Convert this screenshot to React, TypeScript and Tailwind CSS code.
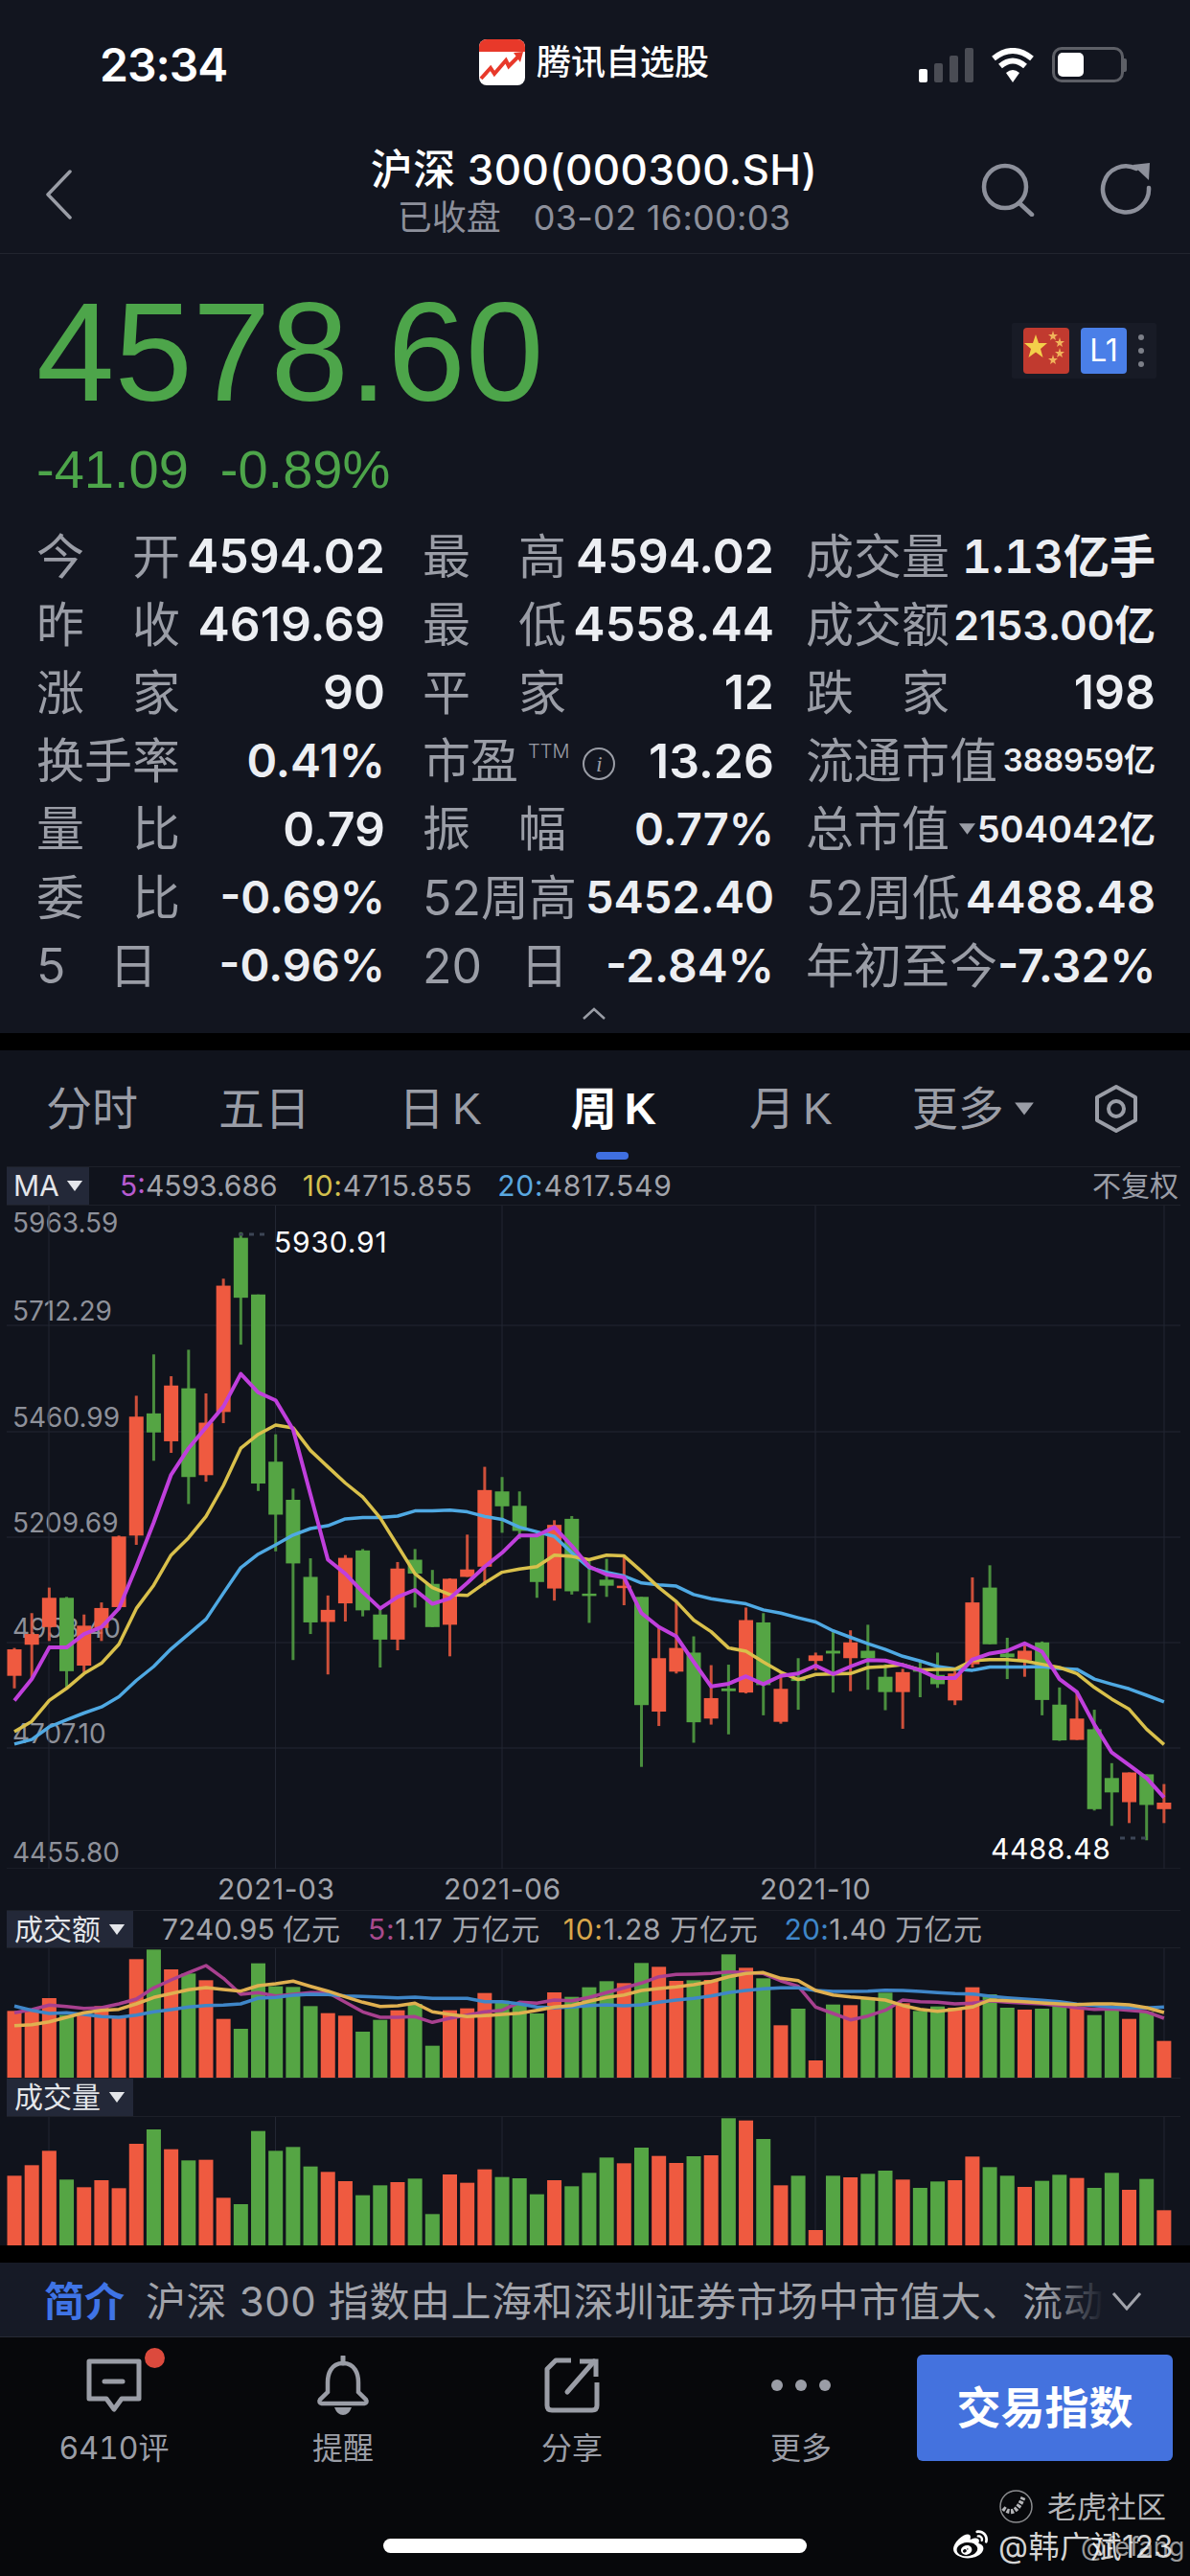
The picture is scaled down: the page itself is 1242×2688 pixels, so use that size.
import React from 'react';
import { FaWeibo } from 'react-icons/fa';

const RED = '#ef5a40';
const GREEN = '#55a544';

// color, wick top, body top, body bottom, wick bottom (raw chart units, scaled by toChartY)
type Candle = ['r' | 'g', number, number, number, number];

const candles: Candle[] = [
  ['r', 1070, 1073, 1130, 1157], ['r', 995, 1040, 1063, 1135], ['r', 940, 962, 1025, 1055], ['g', 960, 962, 1120, 1155],
  ['r', 998, 1022, 1108, 1122], ['r', 972, 984, 1027, 1055], ['r', 828, 830, 982, 985], ['r', 527, 572, 828, 848],
  ['g', 438, 565, 606, 667], ['r', 485, 505, 625, 650], ['g', 428, 511, 702, 760], ['r', 522, 585, 698, 712],
  ['r', 275, 290, 562, 586], ['g', 175, 187, 316, 417], ['g', 309, 309, 716, 732], ['g', 610, 669, 783, 862],
  ['g', 727, 751, 888, 1096], ['g', 877, 917, 1015, 1040], ['r', 957, 988, 1014, 1127], ['r', 870, 876, 974, 1013],
  ['g', 857, 860, 989, 1002], ['g', 985, 998, 1052, 1112], ['r', 885, 899, 1052, 1075], ['g', 857, 880, 910, 983],
  ['g', 902, 932, 1025, 1025], ['r', 920, 921, 1020, 1088], ['r', 826, 901, 917, 917], ['r', 680, 730, 895, 935],
  ['g', 702, 733, 765, 822], ['g', 733, 764, 818, 835], ['g', 820, 825, 928, 962], ['r', 795, 805, 942, 968],
  ['g', 786, 792, 948, 955], ['g', 880, 953, 958, 1016], ['g', 878, 923, 936, 960], ['r', 870, 936, 940, 978],
  ['g', 960, 960, 1193, 1326], ['r', 1025, 1092, 1207, 1238], ['r', 972, 1070, 1121, 1125], ['g', 1045, 1080, 1230, 1274],
  ['r', 1107, 1178, 1222, 1235], ['g', 1106, 1157, 1163, 1256], ['r', 983, 1010, 1166, 1168], ['g', 995, 1015, 1150, 1215],
  ['r', 1125, 1158, 1229, 1233], ['g', 1092, 1136, 1141, 1203], ['r', 1080, 1086, 1098, 1118], ['g', 1036, 1076, 1082, 1166],
  ['r', 1032, 1058, 1092, 1163], ['g', 1020, 1076, 1092, 1160], ['g', 1105, 1132, 1165, 1204], ['r', 1115, 1122, 1165, 1244],
  ['g', 1098, 1116, 1120, 1176], ['g', 1080, 1128, 1148, 1156], ['r', 1120, 1125, 1183, 1193], ['r', 918, 972, 1105, 1112],
  ['g', 892, 940, 1062, 1062], ['g', 1048, 1082, 1090, 1137], ['r', 1060, 1076, 1097, 1132], ['g', 1056, 1058, 1182, 1215],
  ['g', 1155, 1192, 1269, 1270], ['r', 1165, 1222, 1268, 1268], ['g', 1203, 1245, 1417, 1420], ['g', 1318, 1350, 1381, 1453],
  ['r', 1338, 1338, 1402, 1447], ['g', 1342, 1342, 1408, 1484], ['r', 1363, 1403, 1417, 1447],
];

const ma5 = [1183,1137,1069,1069,1040,1025,985,895,800,697,640,595,550,480,520,537,600,740,880,910,950,985,960,945,975,963,930,895,865,828,828,810,850,895,912,918,995,1025,1045,1100,1153,1147,1131,1148,1130,1125,1108,1126,1110,1096,1097,1107,1118,1135,1135,1095,1082,1076,1060,1078,1137,1165,1235,1295,1322,1350,1392];
const ma10 = [1250,1228,1183,1157,1125,1103,1062,985,935,870,833,787,720,640,610,590,596,645,680,715,745,790,850,910,940,955,957,930,907,900,895,870,873,880,870,872,905,940,970,1010,1035,1070,1077,1100,1122,1138,1127,1126,1125,1112,1110,1106,1117,1116,1116,1097,1095,1095,1098,1105,1112,1125,1155,1180,1202,1245,1278];
const ma20 = [1277,1267,1240,1225,1210,1197,1175,1140,1110,1072,1040,1008,952,897,868,848,827,813,807,792,789,789,786,775,775,773,777,787,793,810,820,830,865,897,907,915,930,934,937,955,964,970,975,988,995,1005,1014,1033,1047,1061,1073,1088,1098,1110,1115,1118,1111,1111,1111,1110,1114,1116,1137,1148,1158,1172,1186];

const turnover = [442,440,402,455,450,427,460,280,250,312,325,346,467,498,293,365,367,427,449,457,507,470,440,420,551,440,434,386,410,415,450,384,398,368,349,355,292,304,348,346,345,265,307,340,487,435,597,422,424,400,385,418,442,428,432,368,390,432,438,435,425,432,455,430,467,445,536];
const turnover5 = [448,438,424,428,434,432,420,405,370,345,322,300,340,390,385,395,390,385,385,415,445,462,462,460,478,465,455,445,440,415,418,408,410,400,385,370,355,335,328,327,325,320,322,325,348,365,430,450,470,458,440,408,413,415,420,418,410,415,418,420,425,432,437,436,440,445,465];
const turnover10 = [488,485,476,462,448,440,437,420,400,388,376,369,375,380,363,357,349,365,380,398,415,428,426,418,445,453,460,457,453,449,440,430,425,412,400,392,378,372,367,360,350,335,325,322,340,347,378,392,398,403,408,425,437,443,437,430,408,410,413,417,420,422,420,420,423,432,447];
const turnover20 = [427,440,450,448,453,460,462,455,445,438,430,425,424,420,402,400,393,390,391,395,397,399,401,399,403,403,403,413,413,420,430,432,430,425,423,426,423,415,408,403,395,385,378,373,370,370,378,381,381,380,377,378,381,385,388,389,396,401,405,409,413,421,425,430,432,433,430];
const volume = [958,925,880,970,994,972,997,858,813,875,910,908,1027,1047,818,880,868,929,946,975,1019,988,978,967,1078,954,980,938,962,966,1016,972,991,949,901,919,870,896,918,897,894,778,785,843,988,958,1128,958,963,952,942,970,996,976,972,898,931,958,993,974,955,965,996,949,1002,968,1066];

const BAR_WIDTH = 15;
const slotX = (i: number) => 15 + 18.18 * i;
const toChartY = (v: number) => v / 2.0632 - 57;
const toTurnoverY = (v: number) => v / 3 - 82;
const toVolumeY = (v: number) => v / 3 - 258;

const GRID = '#232733';
const GRID_X = [51, 287.5, 524, 851, 1215];

function toPoints(values: number[], scale: (v: number) => number) {
  return values.map((v, i) => `${slotX(i).toFixed(1)},${scale(v).toFixed(1)}`).join(' ');
}

function Caret({ className }: { className: string }) {
  return (
    <svg viewBox="0 0 20 14" className={className}>
      <path d="M1 1H19L10 13Z" fill="currentColor" />
    </svg>
  );
}

function StatusBar() {
  return (
    <div className="h-[132px] relative flex items-center justify-center shrink-0">
      <span className="absolute left-[104px] top-[40px] text-[48px] leading-[56px] font-semibold text-white tracking-[-1px]">23:34</span>
      <div className="flex items-center gap-[12px] -mt-[2px] ml-[-2px]">
        <svg viewBox="0 0 48 48" className="w-[48px] h-[48px]">
          <rect width="48" height="48" rx="8" fill="#fff" />
          <path d="M0 13V8a8 8 0 0 1 8-8h32a8 8 0 0 1 8 8v5Z" fill="#e8392a" />
          <path d="M2 41 L12 30 L16 36 L28 22 L31 28 L42 17" fill="none" stroke="#e8392a" strokeWidth="4" />
          <path d="M36 14 L46 13 L43 24Z" fill="#e8392a" />
        </svg>
        <span className="text-[36px] leading-[48px] font-medium text-white">腾讯自选股</span>
      </div>
      <div className="absolute left-[959px] top-[49px] flex items-center gap-[18px]">
        <div className="flex items-end gap-[7px] h-[36px]">
          <div className="w-[9px] h-[14px] rounded-[2px] bg-white" />
          <div className="w-[9px] h-[20px] rounded-[2px] bg-[#4a4c54]" />
          <div className="w-[9px] h-[28px] rounded-[2px] bg-[#4a4c54]" />
          <div className="w-[9px] h-[36px] rounded-[2px] bg-[#4a4c54]" />
        </div>
        <svg viewBox="0 0 46 36" className="w-[46px] h-[36px]">
          <path d="M3 11 Q23 -5 43 11" fill="none" stroke="#fff" strokeWidth="6" />
          <path d="M10 19 Q23 8 36 19" fill="none" stroke="#fff" strokeWidth="6" />
          <path d="M16 26 L23 36 L30 26 Q23 20 16 26Z" fill="#fff" />
        </svg>
        <div className="flex items-center">
          <div className="w-[75px] h-[37px] rounded-[10px] border-[3px] border-[#5d5f66] p-[3px]">
            <div className="w-[27px] h-full rounded-[5px] bg-white" />
          </div>
          <div className="w-[3px] h-[14px] bg-[#5d5f66] rounded-r-[2px]" />
        </div>
      </div>
    </div>
  );
}

function NavBar() {
  return (
    <div className="h-[133px] relative shrink-0 border-b border-[#22252f] flex flex-col items-center">
      <svg viewBox="0 0 30 52" className="absolute left-[46px] top-[45px] w-[30px] h-[52px]">
        <path d="M27 2 L4 26 L27 50" fill="none" stroke="#9a9da6" strokeWidth="3.5" strokeLinecap="round" strokeLinejoin="round" />
      </svg>
      <div className="text-[44px] leading-[54px] font-medium text-white mt-[18px] tracking-[0.4px] -ml-[2px]">沪深 300(000300.SH)</div>
      <div className="text-[36px] leading-[44px] text-[#8d909b] mt-[1px] flex gap-[34px] -ml-[2px]">
        <span>已收盘</span>
        <span className="tracking-[0.3px]">03-02 16:00:03</span>
      </div>
      <svg viewBox="0 0 60 56" className="absolute left-[1021px] top-[38px] w-[60px] h-[56px]">
        <circle cx="28" cy="25" r="22" fill="none" stroke="#8d909b" strokeWidth="4.5" />
        <path d="M43 42 L56 54" fill="none" stroke="#8d909b" strokeWidth="4.5" strokeLinecap="round" />
      </svg>
      <svg viewBox="0 0 54 54" className="absolute left-[1148px] top-[38px] w-[54px] h-[54px]">
        <path d="M38 6 A24 24 0 1 0 51 26" fill="none" stroke="#8d909b" strokeWidth="4.5" strokeLinecap="round" />
        <path d="M34 2 L52 0 L51 18 Z" fill="#8d909b" />
      </svg>
    </div>
  );
}

function Label({ a, b }: { a: string; b: string }) {
  return (
    <div className="w-[150px] flex justify-between text-[#9a9da6] text-[50px] leading-[60px]">
      <span>{a}</span>
      <span>{b}</span>
    </div>
  );
}

function Row({ label, value, size = 'text-[50px]' }: { label: React.ReactNode; value: string; size?: string }) {
  return (
    <div className="flex items-center justify-between h-[71.2px]">
      {label}
      <span className={`${size} font-semibold text-[#eceef2] whitespace-nowrap`}>{value}</span>
    </div>
  );
}

const wide = 'text-[#9a9da6] text-[50px] leading-[60px] whitespace-nowrap';

function QuotePanel() {
  return (
    <div className="h-[813px] relative shrink-0 px-[38px]">
      <div className="pt-[32px] h-[171px] text-[#4da54a] text-[146.5px] leading-[140px] font-['Liberation_Sans',sans-serif]">4578.60</div>
      <div className="mt-[24px] h-[60px] flex gap-[33px] text-[#4da54a] text-[56px] leading-[60px] font-['Liberation_Sans',sans-serif]">
        <span>-41.09</span>
        <span>-0.89%</span>
      </div>
      <div className="absolute left-[1056px] top-[72px] w-[151px] h-[58px] bg-[#181b26] flex items-center pl-[12px] gap-[12px] rounded-[2px]">
        <svg viewBox="0 0 48 48" className="w-[48px] h-[48px]">
          <rect width="48" height="48" rx="4" fill="#c13a2f" />
          <path d="M13 7 L16 16 L25 16 L18 22 L20.500 31 L13 25.500 L5.500 31 L8 22 L1 16 L10 16Z" fill="#f3cf4a" />
          <path d="M31 3 L32.200 7 L36 7 L33 9.500 L34 13 L31 11 L28 13 L29 9.500 L26 7 L29.800 7Z" fill="#f0b35a" />
          <path d="M38 10 L39.200 14 L43 14 L40 16.500 L41 20 L38 18 L35 20 L36 16.500 L33 14 L36.800 14Z" fill="#f0b35a" />
          <path d="M38 21 L39.200 25 L43 25 L40 27.500 L41 31 L38 29 L35 31 L36 27.500 L33 25 L36.800 25Z" fill="#f0b35a" />
          <path d="M31 28 L32.200 32 L36 32 L33 34.500 L34 38 L31 36 L28 38 L29 34.500 L26 32 L29.800 32Z" fill="#f0b35a" />
        </svg>
        <div className="w-[48px] h-[48px] rounded-[4px] bg-[#4a7fe8] flex items-center justify-center text-white text-[32px]">L1</div>
        <div className="flex flex-col gap-[8px]">
          <div className="w-[6px] h-[6px] rounded-full bg-[#7c7f88]" />
          <div className="w-[6px] h-[6px] rounded-full bg-[#7c7f88]" />
          <div className="w-[6px] h-[6px] rounded-full bg-[#7c7f88]" />
        </div>
      </div>
      <div className="mt-[25px] flex">
        <div className="w-[364px] shrink-0">
          <Row label={<Label a="今" b="开" />} value="4594.02" />
          <Row label={<Label a="昨" b="收" />} value="4619.69" />
          <Row label={<Label a="涨" b="家" />} value="90" />
          <Row label={<span className={wide}>换手率</span>} value="0.41%" size="text-[48px]" />
          <Row label={<Label a="量" b="比" />} value="0.79" />
          <Row label={<Label a="委" b="比" />} value="-0.69%" size="text-[47px]" />
          <Row label={<div className="w-[126px] flex justify-between text-[#9a9da6] text-[50px] leading-[60px]"><span>5</span><span>日</span></div>} value="-0.96%" size="text-[47px]" />
        </div>
        <div className="w-[367px] ml-[39px] shrink-0">
          <Row label={<Label a="最" b="高" />} value="4594.02" />
          <Row label={<Label a="最" b="低" />} value="4558.44" />
          <Row label={<Label a="平" b="家" />} value="12" />
          <Row
            label={
              <div className="flex items-center">
                <span className={wide}>市盈</span>
                <span className="text-[20px] text-[#9a9da6] ml-[10px] -mt-[20px] font-light">TTM</span>
                <span className="ml-[14px] mt-[6px] w-[34px] h-[34px] rounded-full border-2 border-[#9a9da6] text-[#9a9da6] flex items-center justify-center text-[24px] italic font-['Liberation_Serif',serif]">i</span>
              </div>
            }
            value="13.26"
          />
          <Row label={<Label a="振" b="幅" />} value="0.77%" size="text-[47px]" />
          <Row label={<span className={wide}>52周高</span>} value="5452.40" size="text-[47px]" />
          <Row label={<div className="w-[152px] flex justify-between text-[#9a9da6] text-[50px] leading-[60px]"><span>20</span><span>日</span></div>} value="-2.84%" size="text-[48px]" />
        </div>
        <div className="w-[365px] ml-[33px] shrink-0">
          <Row label={<span className={wide}>成交量</span>} value="1.13亿手" size="text-[48px] tabular-nums" />
          <Row label={<span className={wide}>成交额</span>} value="2153.00亿" size="text-[43px]" />
          <Row label={<Label a="跌" b="家" />} value="198" />
          <Row label={<span className={wide}>流通市值</span>} value="388959亿" size="text-[33px]" />
          <Row
            label={
              <div className="flex items-center gap-[9px]">
                <span className={wide}>总市值</span>
                <Caret className="w-[19px] h-[14px] text-[#9a9da6]" />
              </div>
            }
            value="504042亿"
            size="text-[38px]"
          />
          <Row label={<span className={wide}>52周低</span>} value="4488.48" size="text-[47px]" />
          <Row label={<span className={wide}>年初至今</span>} value="-7.32%" size="text-[48px]" />
        </div>
      </div>
      <svg viewBox="0 0 26 14" className="absolute left-[607px] top-[786px] w-[26px] h-[14px]">
        <path d="M2 12 L13 2 L24 12" fill="none" stroke="#9a9da6" strokeWidth="2.5" />
      </svg>
    </div>
  );
}

function TabBar() {
  return (
    <div className="h-[121px] relative shrink-0 flex items-center pl-[48px] text-[#9a9da6] text-[48px] leading-[60px]">
      <span>分时</span>
      <span className="ml-[84px]">五日</span>
      <span className="ml-[92px] flex items-center">日<span className="ml-[8px] text-[46px] font-['Liberation_Sans',sans-serif]">K</span></span>
      <span className="ml-[93px] flex items-center text-white font-semibold">周<span className="ml-[8px] text-[46px] font-['Liberation_Sans',sans-serif]">K</span></span>
      <span className="ml-[97px] flex items-center">月<span className="ml-[8px] text-[46px] font-['Liberation_Sans',sans-serif]">K</span></span>
      <span className="ml-[83px]">更多</span>
      <Caret className="ml-[10px] w-[22px] h-[16px]" />
      <svg viewBox="0 0 46 52" className="ml-[62px] w-[46px] h-[52px]">
        <path d="M23 3 L43 14 V38 L23 49 L3 38 V14 Z" fill="none" stroke="#9a9da6" strokeWidth="4" strokeLinejoin="round" />
        <circle cx="23" cy="26" r="8" fill="none" stroke="#9a9da6" strokeWidth="4" />
      </svg>
      <div className="absolute left-[622px] top-[106px] w-[34px] h-[8px] rounded-full bg-[#3f6fe0]" />
    </div>
  );
}

function Legend({ tag, children, tall }: { tag: string; children?: React.ReactNode; tall?: boolean }) {
  return (
    <div className={`flex items-center ${tall ? 'h-[41px]' : 'h-[40px]'} ml-[7px] mr-[10px] border-y border-[#1d2029] text-[30px] text-[#a2a4ab] whitespace-nowrap shrink-0`}>
      <div className="h-full w-[132px] bg-[#232838] flex items-center pl-[8px] gap-[8px] text-[#e4e6ea]">
        <span>{tag}</span>
        <Caret className="w-[18px] h-[13px]" />
      </div>
      {children}
    </div>
  );
}

function Bars({ tops, scale, height, lines }: { tops: number[]; scale: (v: number) => number; height: number; lines?: { values: number[]; color: string }[] }) {
  return (
    <svg viewBox={`0 0 1242 ${height}`} className="block w-[1242px]" style={{ height }}>
      {GRID_X.map((x) => (
        <line key={x} x1={x} x2={x} y1={0} y2={height} stroke={GRID} strokeWidth="1" />
      ))}
      {tops.map((v, i) => (
        <rect key={i} x={slotX(i) - BAR_WIDTH / 2} y={scale(v)} width={BAR_WIDTH} height={height - scale(v)} fill={candles[i][0] === 'r' ? RED : GREEN} />
      ))}
      {lines?.map((l) => (
        <polyline key={l.color} points={toPoints(l.values, scale)} fill="none" stroke={l.color} strokeWidth="3.5" strokeLinejoin="round" />
      ))}
    </svg>
  );
}

function KChart() {
  const axis = ['5963.59', '5712.29', '5460.99', '5209.69', '4958.40', '4707.10', '4455.80'];
  const axisTop = ['top-[2px]', 'top-[94px]', 'top-[205px]', 'top-[315px]', 'top-[425px]', 'top-[535px]', 'top-[659px]'];
  return (
    <div className="h-[692px] relative shrink-0">
      {axis.map((label, i) => (
        <span key={label} className={`absolute left-[13px] ${axisTop[i]} text-[28px] leading-[32px] text-[#8e919a]`}>{label}</span>
      ))}
      <svg viewBox="0 0 1242 692" className="absolute inset-0 w-[1242px] h-[692px]">
        {[125, 236, 346, 456, 566, 692].map((y) => (
          <line key={y} x1={7} x2={1232} y1={y} y2={y} stroke={GRID} strokeWidth="1" />
        ))}
        {GRID_X.map((x) => (
          <line key={x} x1={x} x2={x} y1={0} y2={692} stroke={GRID} strokeWidth="1" />
        ))}
        {candles.map(([c, wt, bt, bb, wb], i) => {
          const fill = c === 'r' ? RED : GREEN;
          const x = slotX(i);
          return (
            <g key={i}>
              <rect x={x - 1.5} y={toChartY(wt)} width={3} height={toChartY(wb) - toChartY(wt)} fill={fill} opacity={0.85} />
              <rect x={x - BAR_WIDTH / 2} y={toChartY(bt)} width={BAR_WIDTH} height={Math.max(toChartY(bb) - toChartY(bt), 2.5)} fill={fill} />
            </g>
          );
        })}
        <polyline points={toPoints(ma20, toChartY)} fill="none" stroke="#4fa9e3" strokeWidth="3.5" strokeLinejoin="round" />
        <polyline points={toPoints(ma10, toChartY)} fill="none" stroke="#d9c04b" strokeWidth="3.5" strokeLinejoin="round" />
        <polyline points={toPoints(ma5, toChartY)} fill="none" stroke="#c03fdc" strokeWidth="4" strokeLinejoin="round" />
        <line x1={249} x2={276} y1={30} y2={30} stroke="#3d4656" strokeWidth="3" strokeDasharray="5 6" />
        <line x1={1169} x2={1196} y1={660} y2={660} stroke="#3d4656" strokeWidth="3" strokeDasharray="5 6" />
      </svg>
      <span className="absolute left-[286px] top-[22px] text-[30px] leading-[32px] tracking-[0.8px] text-white">5930.91</span>
      <span className="absolute left-[1034px] top-[655px] text-[30px] leading-[32px] tracking-[0.5px] text-white">4488.48</span>
    </div>
  );
}

function BottomTab({ icon, label }: { icon: React.ReactNode; label: string }) {
  return (
    <div className="w-[120px] flex flex-col items-center relative">
      <div className="h-[64px] flex items-center justify-center">{icon}</div>
      <span className="mt-[14px] text-[32px] leading-[40px] text-[#9a9da6] whitespace-nowrap tabular-nums">{label}</span>
    </div>
  );
}

export default function App() {
  return (
    <div className="w-[1242px] h-[2688px] overflow-hidden bg-[#12151f] flex flex-col font-['Inter','Noto_Sans_CJK_SC',sans-serif]">
      <StatusBar />
      <NavBar />
      <QuotePanel />
      <div className="h-[18px] bg-black shrink-0" />
      <div className="flex-1 flex flex-col bg-[#10131c] min-h-0">
        <TabBar />
        <div className="h-[41px] ml-[7px] mr-[10px] border-y border-[#1d2029] flex items-center text-[30px] text-[#a2a4ab] whitespace-nowrap shrink-0">
          <div className="h-full w-[86px] bg-[#232838] flex items-center pl-[7px] gap-[7px] text-[#e4e6ea] shrink-0">
            <span>MA</span>
            <Caret className="w-[18px] h-[13px]" />
          </div>
          <span className="ml-[32px]"><span className="text-[#b65bd0]">5:</span>4593.686</span>
          <span className="ml-[26px] tracking-[0.8px]"><span className="text-[#d3c04d]">10:</span>4715.855</span>
          <span className="ml-[26px] tracking-[0.8px]"><span className="text-[#5aa8e0]">20:</span>4817.549</span>
          <span className="ml-auto mr-[2px] text-[#9a9da6]">不复权</span>
        </div>
        <KChart />
        <div className="h-[43px] relative shrink-0 text-[30px] leading-[43px] tracking-[0.5px] text-[#a2a4ab]">
          <span className="absolute left-[227px]">2021-03</span>
          <span className="absolute left-[463px]">2021-06</span>
          <span className="absolute left-[793px]">2021-10</span>
        </div>
        <Legend tag="成交额">
          <span className="ml-[30px]">7240.95 亿元</span>
          <span className="ml-[29px] tracking-[0.7px]"><span className="text-[#a84a8c]">5:</span>1.17 万亿元</span>
          <span className="ml-[24px] tracking-[0.7px]"><span className="text-[#d8a64a]">10:</span>1.28 万亿元</span>
          <span className="ml-[27px] tracking-[0.3px]"><span className="text-[#3f86c8]">20:</span>1.40 万亿元</span>
        </Legend>
        <Bars
          tops={turnover}
          scale={toTurnoverY}
          height={135}
          lines={[
            { values: turnover5, color: '#a8408f' },
            { values: turnover20, color: '#3f86c8' },
            { values: turnover10, color: '#e0b050' },
          ]}
        />
        <Legend tag="成交量" tall />
        <Bars tops={volume} scale={toVolumeY} height={134} />
        <div className="h-[18px] bg-black shrink-0" />
        <div className="h-[78px] relative flex items-center pl-[46px] bg-[#161a26] border-b border-[#262a35] shrink-0">
          <span className="text-[42px] font-semibold text-[#3f74e6] mt-[3px]">简介</span>
          <div className="relative ml-[22px] mt-[3px] whitespace-nowrap text-[42px] tracking-[0.6px] text-[#a2a4ab]">
            沪深 300 指数由上海和深圳证券市场中市值大、流动
            <div className="absolute right-0 top-0 h-full w-[60px] bg-gradient-to-r from-transparent to-[#161a26]" />
          </div>
          <svg viewBox="0 0 32 20" className="absolute left-[1160px] top-[30px] w-[32px] h-[20px]">
            <path d="M2 2 L16 18 L30 2" fill="none" stroke="#a2a4ab" strokeWidth="3" />
          </svg>
        </div>
        <div className="flex-1 bg-[#07080b] relative flex pt-[18px] pl-[59px] gap-[119px]">
          <BottomTab
            label="6410评"
            icon={
              <div className="relative">
                <svg viewBox="0 0 58 56" className="w-[58px] h-[56px]">
                  <path d="M3 3 H55 V42 H37 L29 53 L21 42 H3 Z" fill="none" stroke="#9a9da6" strokeWidth="5" strokeLinejoin="round" />
                  <path d="M19 24 H38" stroke="#9a9da6" strokeWidth="5" strokeLinecap="round" />
                </svg>
                <div className="absolute -top-[11px] -right-[24px] w-[21px] h-[21px] rounded-full bg-[#dc4a3d]" />
              </div>
            }
          />
          <BottomTab
            label="提醒"
            icon={
              <svg viewBox="0 0 58 62" className="w-[58px] h-[62px]">
                <path d="M29 8 C16 8 13 20 13 28 V38 L5 46 Q3 49 7 50 H51 Q55 49 53 46 L45 38 V28 C45 20 42 8 29 8Z" fill="none" stroke="#9a9da6" strokeWidth="4.5" />
                <path d="M29 1 V8" stroke="#9a9da6" strokeWidth="5" strokeLinecap="round" />
                <path d="M20 54 H38 Q35 62 29 62 Q23 62 20 54Z" fill="#9a9da6" />
              </svg>
            }
          />
          <BottomTab
            label="分享"
            icon={
              <svg viewBox="0 0 58 58" className="w-[58px] h-[58px]">
                <path d="M28 3 H12 L3 12 V50 Q3 55 8 55 H50 Q55 55 55 50 V26" fill="none" stroke="#9a9da6" strokeWidth="5" strokeLinejoin="round" />
                <path d="M24 36 L52 4" stroke="#9a9da6" strokeWidth="5" strokeLinecap="round" />
                <path d="M37 4 H54 V20" fill="none" stroke="#9a9da6" strokeWidth="5" />
              </svg>
            }
          />
          <div className="w-[120px] flex flex-col items-center">
            <div className="h-[64px] flex items-center justify-center gap-[13px]">
              <div className="w-[12px] h-[12px] rounded-full bg-[#9a9da6]" />
              <div className="w-[12px] h-[12px] rounded-full bg-[#9a9da6]" />
              <div className="w-[12px] h-[12px] rounded-full bg-[#9a9da6]" />
            </div>
            <span className="mt-[14px] text-[32px] leading-[40px] text-[#9a9da6]">更多</span>
          </div>
          <div className="absolute left-[957px] top-[18px] w-[267px] h-[111px] rounded-[6px] bg-[#4472de] flex items-center justify-center text-white text-[46px] font-semibold">交易指数</div>
          <div className="absolute left-[400px] top-[210px] w-[442px] h-[15px] rounded-full bg-white" />
          <div className="absolute left-[1043px] top-[159px] flex items-center gap-[15px] text-[31px] leading-[35px] text-[#b4b5b8] whitespace-nowrap">
            <svg viewBox="0 0 35 35" className="w-[35px] h-[35px]">
              <circle cx="17.500" cy="17.500" r="16.500" fill="none" stroke="#8a8b8e" strokeWidth="1.5" />
              <path d="M4 19 Q16 30 25 8" fill="none" stroke="#b4b5b8" strokeWidth="5" strokeDasharray="3 1.500" />
            </svg>
            <span>老虎社区</span>
          </div>
          <FaWeibo className="absolute left-[991px] top-[199px] w-[44px] h-[36px] text-white" />
          <span className="absolute left-[1042px] top-[198px] text-[32px] leading-[42px] tracking-[0.5px] text-[#d4d4d4] whitespace-nowrap">@韩广斌123</span>
          <span className="absolute left-[1128px] top-[198px] text-[27px] leading-[42px] text-white/60 whitespace-nowrap">@fefang</span>
        </div>
      </div>
    </div>
  );
}
